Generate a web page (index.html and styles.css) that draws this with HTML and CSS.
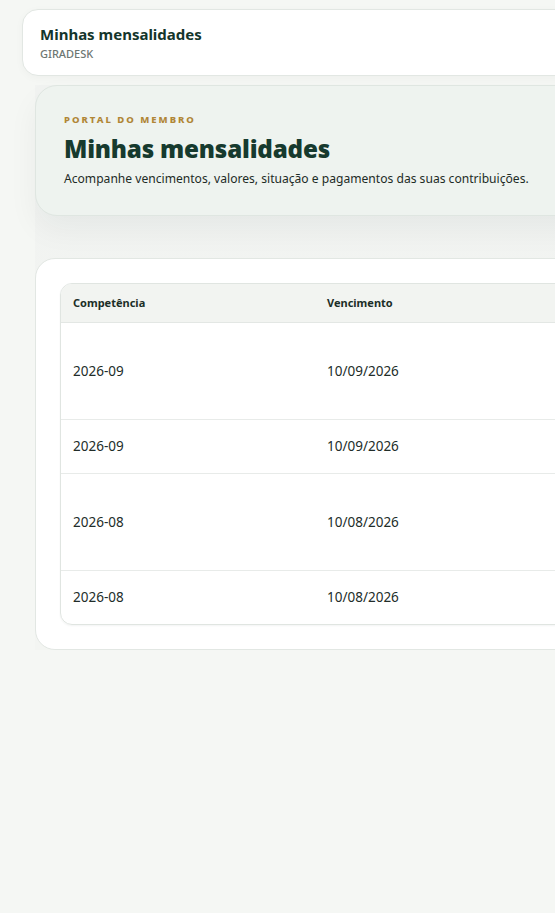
FILE: index.html
```html
<!DOCTYPE html>
<html lang="pt-BR">
<head>
<meta charset="utf-8">
<title>Minhas mensalidades</title>
<link rel="stylesheet" href="styles.css">
</head>
<body>
<div class="page">
  <header class="topbar">
    <div class="topbar-title">Minhas mensalidades</div>
    <div class="topbar-sub">GIRADESK</div>
  </header>
  <main class="main">
    <section class="hero">
      <div class="eyebrow">PORTAL DO MEMBRO</div>
      <h1 class="hero-title">Minhas mensalidades</h1>
      <p class="hero-text">Acompanhe vencimentos, valores, situação e pagamentos das suas contribuições.</p>
    </section>
    <section class="card">
      <div class="table-wrap">
        <table class="table">
          <thead>
            <tr><th class="col-a">Competência</th><th class="col-b">Vencimento</th><th></th></tr>
          </thead>
          <tbody>
            <tr class="tall"><td>2026-09</td><td>10/09/2026</td><td></td></tr>
            <tr class="short"><td>2026-09</td><td>10/09/2026</td><td></td></tr>
            <tr class="tall"><td>2026-08</td><td>10/08/2026</td><td></td></tr>
            <tr class="short last"><td>2026-08</td><td>10/08/2026</td><td></td></tr>
          </tbody>
        </table>
      </div>
    </section>
  </main>
</div>
</body>
</html>
```
FILE: styles.css
```css
* { box-sizing: border-box; }
html, body { margin: 0; padding: 0; }
body {
  background: #f5f7f4;
  font-family: "Noto Sans", "Open Sans", sans-serif;
  color: #1d2b26;
  overflow: hidden;
}
.page {
  width: 1100px;
  padding-top: 9px;
}
.topbar {
  margin-left: 22px;
  height: 67px;
  background: #ffffff;
  border: 1px solid #e2e7e3;
  border-radius: 16px;
  padding: 14px 17px 0;
  box-shadow: 0 2px 8px rgba(20, 40, 30, 0.03);
}
.topbar-title {
  font-size: 15px;
  font-weight: 700;
  color: #14352b;
  line-height: 20px;
}
.topbar-sub {
  font-size: 11px;
  font-weight: 500;
  color: #6d7672;
  line-height: 16px;
  margin-top: 2px;
}
.main {
  margin-left: 35px;
  margin-top: 9px;
  background: linear-gradient(180deg, #f1f3f1 0%, #f3f5f2 100%);
}
.hero {
  height: 131px;
  background: #eef3ef;
  border: 1px solid #dfe6e1;
  border-radius: 22px;
  padding: 28px 28px 0;
  box-shadow: 0 14px 30px rgba(20, 40, 30, 0.05);
}
.eyebrow {
  font-size: 9.5px;
  font-weight: 800;
  letter-spacing: 2px;
  color: #b08636;
  line-height: 12px;
}
.hero-title {
  margin: 7px 0 0;
  font-size: 24.2px;
  font-weight: 900;
  color: #163a2e;
  line-height: 31px;
  letter-spacing: -0.2px;
}
.hero-text {
  margin: 6px 0 0;
  font-size: 12.1px;
  color: #1d2b26;
  line-height: 18px;
}
.card {
  margin-top: 42px;
  background: #ffffff;
  border: 1px solid #e2e7e3;
  border-radius: 20px;
  padding: 24px;
}
.table-wrap {
  border: 1px solid #e0e5e1;
  border-radius: 12px;
  overflow: hidden;
  box-shadow: 0 1px 2px rgba(20, 40, 30, 0.05);
}
.table {
  width: 100%;
  border-collapse: collapse;
}
.table th {
  background: #f2f4f1;
  text-align: left;
  font-size: 11px;
  font-weight: 700;
  color: #1b2e27;
  height: 38px;
  padding: 0 12px;
  border-bottom: 1px solid #e3e7e4;
}
.col-a, .col-b { width: 254px; }
.table td {
  font-size: 13.5px;
  color: #222d29;
  padding: 0 12px;
  border-bottom: 1px solid #e8ebe9;
}
.tall td { height: 97px; }
.short td { height: 54px; }
.last td { border-bottom: none; height: 54px; }
```
